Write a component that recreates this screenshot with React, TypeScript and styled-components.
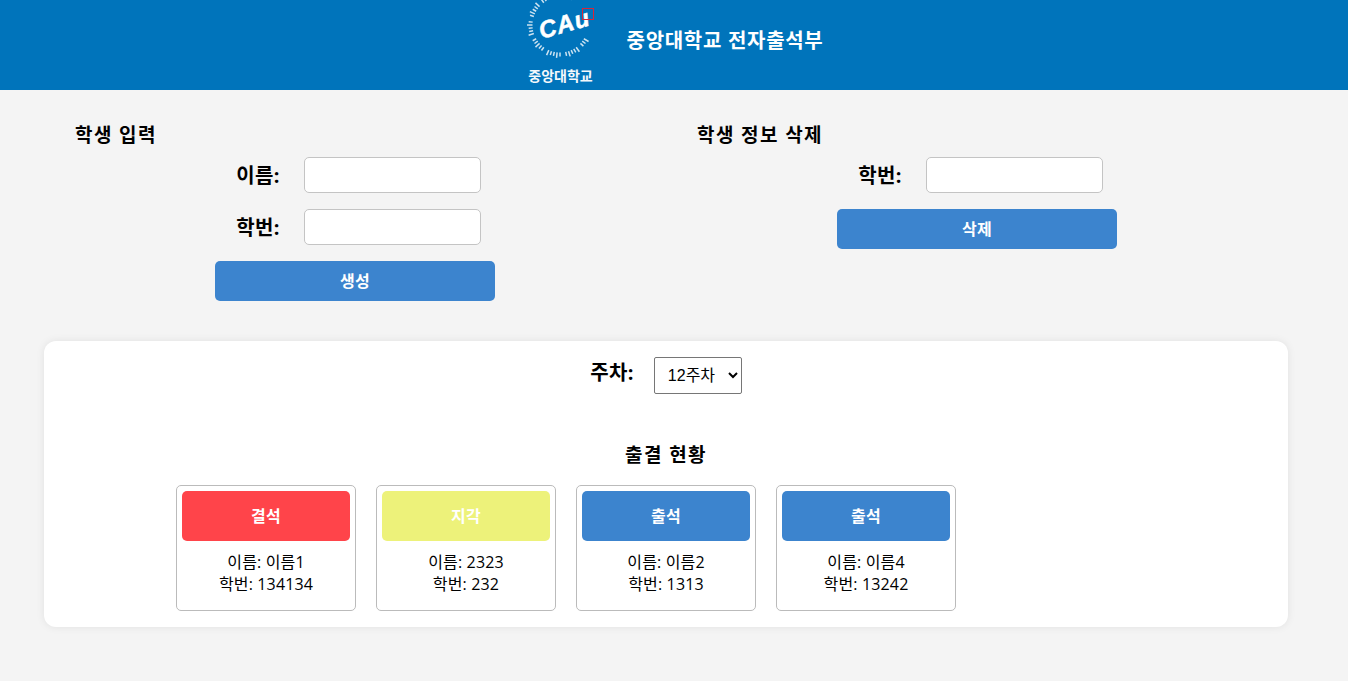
import React from "react";
import styled, { createGlobalStyle } from "styled-components";

const Global = createGlobalStyle`
  html, body { margin: 0; padding: 0; background: #f4f4f4; }
  body { font-family: "Open Sans", "Noto Sans CJK KR", sans-serif; color: #000; }
  * { box-sizing: border-box; }
`;
const Page = styled.div`min-height: 681px; background: #f4f4f4; overflow: hidden;`;
const Header = styled.header`
  height: 90px; background: #0074bb; display: flex; align-items: flex-start; justify-content: center;
  padding-left: 2px; gap: 32px; overflow: hidden;
`;
const Logo = styled.div`width: 68px; height: 90px; display: flex; flex-direction: column; align-items: center; flex: none;`;
const LogoName = styled.div`font-size: 14px; line-height: 20px; font-weight: 700; color: #f4f8fb; margin-top: 6px; white-space: nowrap;`;
const Title = styled.h1`margin: 0; font-size: 20px; line-height: 27px; font-weight: 700; letter-spacing: .7px; color: #fff; padding-top: 27px;`;
const Main = styled.main`width: 1244px; margin-left: 44px;`;
const Forms = styled.div`display: grid; grid-template-columns: 622px 622px; padding-top: 32px;`;
const FormColumn = styled.section`display: flex; flex-direction: column;`;
const SectionTitle = styled.h2`margin: 0 0 8px 31px; font-size: 19px; line-height: 27px; font-weight: 700; letter-spacing: 1.4px;`;
const Row = styled.div`display: flex; align-items: center; justify-content: center; gap: 24px; margin-bottom: 16px; padding-left: 7px;`;
const Label = styled.label`font-size: 20px; line-height: 27px; font-weight: 700; letter-spacing: .4px; padding-top: 1px; white-space: nowrap;`;
const TextInput = styled.input`width: 177px; height: 36px; background: #fff; border: 1px solid #c4c4c4; border-radius: 5px; padding: 0 8px;`;
const PrimaryButton = styled.button`
  width: 280px; height: 40px; align-self: center; border: 0; border-radius: 5px; background: #3c84ce; color: #fff; padding-top: 1px;
  font: 700 16px/20px "Open Sans", "Noto Sans CJK KR", sans-serif; letter-spacing: .4px;
`;
const Panel = styled.section`
  margin-top: 40px; height: 286px; background: #fff; border-radius: 12px; box-shadow: 0 0 8px rgba(0,0,0,.08);
  padding-top: 16px; display: flex; flex-direction: column; align-items: center;
`;
const WeekRow = styled.div`display: flex; align-items: flex-start; justify-content: center; gap: 20px; height: 37px;`;
const WeekLabel = styled(Label)`line-height: 30px;`;
const WeekSelect = styled.select`
  width: 88px; height: 37px; background: #fff; border: 1px solid #767676; border-radius: 2px; padding-left: 9px; color: #000;
  font: 400 16px "Liberation Sans", "Noto Sans CJK KR", sans-serif;
`;
const StatusTitle = styled(SectionTitle)`margin: 48px 0 16px; text-align: center;`;
const Cards = styled.div`align-self: stretch; display: flex; gap: 20px; padding-left: 132px;`;
const Card = styled.article`
  width: 180px; height: 126px; border: 1px solid #bbb; border-radius: 5px; padding: 5px; background: #fff; text-align: center;
  font-size: 16px; line-height: 22px; letter-spacing: .15px;
`;
const StatusButton = styled.button<{ $tone: string }>`
  display: block; width: 100%; height: 50px; margin-bottom: 10px; border: 0; border-radius: 5px; background: ${p => p.$tone}; color: #fff;
  font: 700 16px/20px "Open Sans", "Noto Sans CJK KR", sans-serif; letter-spacing: .4px;
`;
const CardLine = styled.div`white-space: nowrap;`;

const ringMarks = Array.from({ length: 46 }, (_, i) => 30 + (i * 270) / 45).filter((_, i) => i % 6 !== 3);
const CauLogo = () => (
  <svg width="68" height="60" viewBox="0 0 68 60" aria-label="CAU">
    {ringMarks.map((deg, i) => {
      const a = (deg * Math.PI) / 180;
      const outer = i % 3 === 0 ? 33 : 31.5;
      return <line key={i} x1={33 + 27.5 * Math.cos(a)} y1={25 + 27.5 * Math.sin(a)} x2={33 + outer * Math.cos(a)} y2={25 + outer * Math.sin(a)} stroke="#fff" strokeWidth="1.5" opacity=".8" />;
    })}
    <text x="38" y="32" textAnchor="middle" fill="#fff" stroke="#fff" strokeWidth=".5" fontFamily="'Liberation Sans', sans-serif" fontStyle="italic" fontWeight="700" fontSize="24" letterSpacing="1" transform="rotate(-16 38 26)">
      CAu
    </text>
    <rect x="55.5" y="8.5" width="11" height="11" fill="none" stroke="#d6263a" strokeWidth="1" />
  </svg>
);

const students = [
  { status: "결석", tone: "#ff444a", name: "이름1", id: "134134" },
  { status: "지각", tone: "#edf27a", name: "2323", id: "232" },
  { status: "출석", tone: "#3c84ce", name: "이름2", id: "1313" },
  { status: "출석", tone: "#3c84ce", name: "이름4", id: "13242" },
];

export default function App() {
  return (
    <Page>
      <Global />
      <Header>
        <Logo><CauLogo /><LogoName>중앙대학교</LogoName></Logo>
        <Title>중앙대학교 전자출석부</Title>
      </Header>
      <Main>
        <Forms>
          <FormColumn>
            <SectionTitle>학생 입력</SectionTitle>
            <Row><Label>이름:</Label><TextInput /></Row>
            <Row><Label>학번:</Label><TextInput /></Row>
            <PrimaryButton>생성</PrimaryButton>
          </FormColumn>
          <FormColumn>
            <SectionTitle>학생 정보 삭제</SectionTitle>
            <Row><Label>학번:</Label><TextInput /></Row>
            <PrimaryButton>삭제</PrimaryButton>
          </FormColumn>
        </Forms>
        <Panel>
          <WeekRow>
            <WeekLabel>주차:</WeekLabel>
            <WeekSelect defaultValue="12"><option value="12">12주차</option></WeekSelect>
          </WeekRow>
          <StatusTitle>출결 현황</StatusTitle>
          <Cards>
            {students.map(s => (
              <Card key={s.id}>
                <StatusButton $tone={s.tone}>{s.status}</StatusButton>
                <CardLine>이름: {s.name}</CardLine>
                <CardLine>학번: {s.id}</CardLine>
              </Card>
            ))}
          </Cards>
        </Panel>
      </Main>
    </Page>
  );
}
